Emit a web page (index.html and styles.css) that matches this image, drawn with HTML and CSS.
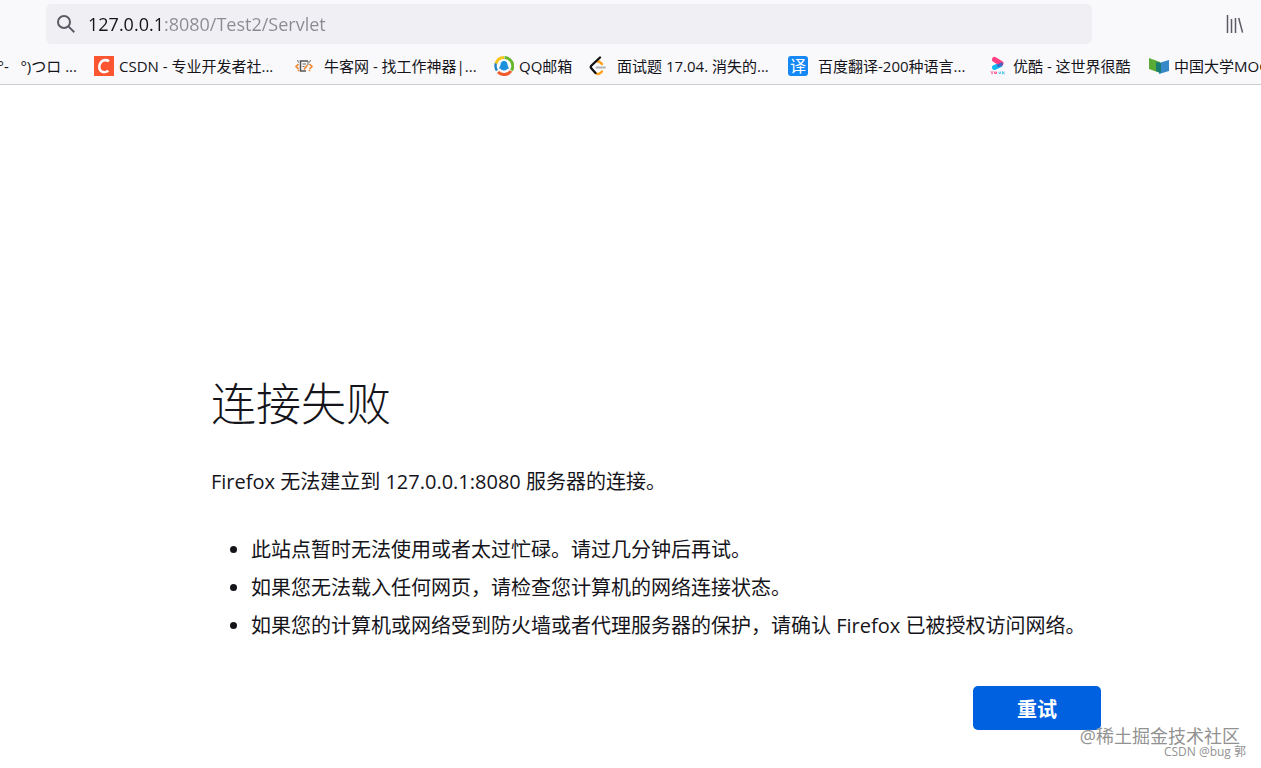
FILE: index.html
```html
<!DOCTYPE html>
<html lang="zh-CN">
<head>
    <meta charset="UTF-8">
    <meta name="viewport" content="width=device-width, initial-scale=1.0">
    <title>连接失败</title>
    <link rel="stylesheet" href="styles.css">
</head>
<body>
    <header class="toolbar">
        <div class="nav-bar">
            <div class="url-box">
                <svg class="search-icon" viewBox="0 0 20 20" aria-hidden="true">
                    <circle cx="8" cy="8" r="6"/>
                    <path d="M12.4 12.4 L18.3 18.3"/>
                </svg>
                <input class="url-input" type="text" aria-label="网址" value="127.0.0.1:8080/Test2/Servlet">
            </div>
            <button class="library" type="button" aria-label="书签库">
                <svg viewBox="0 0 18 18" aria-hidden="true">
                    <path d="M1.5 0V18M5.5 4V18M9.500 3V18M12.7 3L16.6 17.6"/>
                </svg>
            </button>
        </div>

        <nav class="bookmarks" aria-label="书签">
            <a class="bookmark clipped" href="#">(╯°-&nbsp; &nbsp;°)つロ ...</a>
            <a class="bookmark" href="#">
                <svg class="icon" viewBox="0 0 20 20">
                    <rect width="20" height="20" fill="#fc5531"/>
                    <path d="M15 5.2C12.8 3.6 8.9 3.6 6.9 6.2C4.6 9.2 4.7 13.3 7 15.1C9 16.7 12.3 16.2 14.3 14.8" fill="none" stroke="#fff" stroke-width="2.6"/>
                </svg>
                <span>CSDN - 专业开发者社...</span>
            </a>
            <a class="bookmark wide" href="#">
                <svg class="icon" viewBox="0 0 20 20" fill="none">
                    <path d="M14 5H6.5V15H12" stroke="#555" stroke-width="1.5"/>
                    <path d="M14 5V9M8.5 8H12M8.5 10.5H10.5M3.5 4L4.5 6.5M16.5 4L15.5 6.5" stroke="#666"/>
                    <path d="M4.5 8L2 10.500L4.5 13M15.5 8L18 10.500L15.5 13M10 13.500L13.500 9M4 15L5 14M16 15L15 14" stroke="#f08a32" stroke-width="1.7"/>
                </svg>
                <span>牛客网 - 找工作神器|...</span>
            </a>
            <a class="bookmark" href="#">
                <svg class="icon" viewBox="0 0 20 20" fill="none">
                    <path d="M3 14.500A8.300 8.300 0 0 1 2 7" stroke="#2583c5" stroke-width="2.4"/>
                    <path d="M2 7.500A8.500 8.500 0 0 1 10 1.500" stroke="#f8c51b" stroke-width="2.8"/>
                    <path d="M10.5 1.6A8.500 8.500 0 0 1 17.500 14.500" stroke="#68b52f" stroke-width="3"/>
                    <path d="M17 15A8.500 8.500 0 0 1 4 16" stroke="#ef5b2b" stroke-width="3"/>
                    <path d="M10 5C7.500 5 6.500 7 6.500 9L5 12.500L6.500 12.800C8 15 12 15 13.500 12.800L15 12.500L13.500 9C13.500 7 12.500 5 10 5Z" fill="#1b91dc"/>
                </svg>
                <span>QQ邮箱</span>
            </a>
            <a class="bookmark wide" href="#">
                <svg class="icon" viewBox="0 0 20 20" fill="none" stroke-linecap="round">
                    <path d="M10 5.500L12 5.500L15 8M8.500 17C10.500 19 13 18 15 15.500" stroke="#ffa116" stroke-width="2.3"/>
                    <path d="M13 1.500L4.500 9.500C3.500 10.500 3.500 11.500 4.500 12.500L8.500 17" stroke="#111" stroke-width="2.3"/>
                    <path d="M9.500 11.500H18" stroke="#b3b3b3" stroke-width="1.8"/>
                </svg>
                <span>面试题 17.04. 消失的...</span>
            </a>
            <a class="bookmark wide" href="#">
                <span class="icon translate-icon" aria-hidden="true">译</span>
                <span>百度翻译-200种语言...</span>
            </a>
            <a class="bookmark" href="#">
                <svg class="icon" viewBox="0 0 20 20" fill="none" stroke-linecap="round">
                    <path d="M6.500 11.500L12 9" stroke="#13b9f5" stroke-width="5"/>
                    <path d="M6.500 3.500L13 7.500" stroke="#ff3f83" stroke-width="5"/>
                    <path d="M13.500 8L10.500 9.500" stroke="#4065c8" stroke-width="3"/>
                    <path d="M3 15.500L4 16.500L5 15.500M4 16.500V18M7 16H8.500V17.500H7Z" stroke="#ff5790"/>
                    <path d="M11 16V17.500H12.500V16M14.500 15.500V18M16.500 16L15 17L16.500 18" stroke="#57c8f0"/>
                </svg>
                <span>优酷 - 这世界很酷</span>
            </a>
            <a class="bookmark" href="#">
                <svg class="icon" viewBox="0 0 20 20">
                    <path d="M0 2L11 6V17L0 13Z" fill="#5aab35"/>
                    <path d="M10 7L20 4V15L10 18Z" fill="#3689c9"/>
                    <path d="M7 6L12 7V17L7 15Z" fill="#187d73"/>
                </svg>
                <span>中国大学MOOC</span>
            </a>
        </nav>
    </header>

    <main class="container">
        <h1>连接失败</h1>
        <p>Firefox 无法建立到 127.0.0.1:8080 服务器的连接。</p>
        <ul>
            <li>此站点暂时无法使用或者太过忙碌。请过几分钟后再试。</li>
            <li>如果您无法载入任何网页，请检查您计算机的网络连接状态。</li>
            <li>如果您的计算机或网络受到防火墙或者代理服务器的保护，请确认 Firefox 已被授权访问网络。</li>
        </ul>
        <div class="actions">
            <button class="retry" type="button">重试</button>
        </div>
    </main>

    <div class="watermark community">@稀土掘金技术社区</div>
    <div class="watermark author">CSDN @bug 郭</div>
</body>
</html>
```
FILE: styles.css
```css
* { box-sizing: border-box; }
body {
    margin: 0;
    position: relative;
    min-height: 100vh;
    overflow-x: hidden;
    background: #fff;
    color: #15141a;
    font-family: "Open Sans", "Noto Sans CJK SC", sans-serif;
}
.toolbar {
    background: #f9f9fb;
    border-bottom: 1px solid #cccccf;
}
.nav-bar {
    display: flex;
    align-items: center;
    justify-content: space-between;
    padding: 4px 16px 4px 46px;
}
.url-box {
    display: flex;
    align-items: center;
    gap: 12px;
    flex: 1;
    height: 40px;
    margin-right: 134px;
    padding: 0 10px;
    border-radius: 5px;
    background: #f0f0f4;
}
.search-icon {
    width: 20px;
    height: 20px;
    fill: none;
    stroke: #5b5b66;
    stroke-width: 2;
}
.url-input {
    flex: 1;
    padding: 0;
    border: none;
    outline: none;
    font-family: inherit;
    font-size: 18px;
    line-height: 24px;
    /* host is dark, the rest of the address is grey */
    background: linear-gradient(to right, #15141a 77px, #8a8a92 77px);
    -webkit-background-clip: text;
    background-clip: text;
    color: transparent;
}
.library {
    width: 19px;
    height: 20px;
    padding: 0;
    border: none;
    background: none;
}
.library svg {
    display: block;
    width: 18px;
    height: 18px;
    fill: none;
    stroke: #5b5b66;
    stroke-width: 1.5;
}
.bookmarks {
    display: grid;
    grid-template-columns: 94px 200px 200px 93px 201px 200px 161px 1fr;
    height: 36px;
    overflow: hidden;
}
.bookmark {
    display: flex;
    align-items: center;
    gap: 5px;
    min-width: 0;
    color: #15141a;
    font-size: 15px;
    line-height: 20px;
    text-decoration: none;
    white-space: nowrap;
}
.bookmark.wide { gap: 10px; }
.bookmark.clipped {
    justify-content: flex-end;
    padding-right: 17px;
}
.icon {
    flex: none;
    width: 20px;
    height: 20px;
}
.translate-icon {
    border-radius: 3px;
    background: #1588f5;
    color: #fff;
    font-size: 16px;
    text-align: center;
}
.container {
    max-width: 941px;
    margin: 0 auto;
    padding: 284px 0 38px 51px;
    font-size: 20px;
}
h1 {
    margin: 0;
    font-size: 45px;
    font-weight: 300;
    line-height: 70px;
}
p {
    margin: 28px 0 38px;
    line-height: 30px;
}
ul {
    margin: 0;
    padding-left: 40px;
}
li {
    margin-bottom: 8px;
    line-height: 30px;
}
.actions {
    display: flex;
    justify-content: flex-end;
    margin-top: 45px;
}
.retry {
    width: 128px;
    height: 44px;
    border: none;
    border-radius: 5px;
    background: #0061e0;
    color: #fff;
    font-family: inherit;
    font-size: 20px;
    font-weight: bold;
}
.watermark {
    position: absolute;
    white-space: nowrap;
    color: #929292;
    text-shadow: 0 0 1px #fff;
}
.community {
    right: 21px;
    bottom: 20px;
    font-size: 18px;
    line-height: 24px;
}
.author {
    right: 15px;
    bottom: 8px;
    font-size: 12px;
    line-height: 16px;
}
```
